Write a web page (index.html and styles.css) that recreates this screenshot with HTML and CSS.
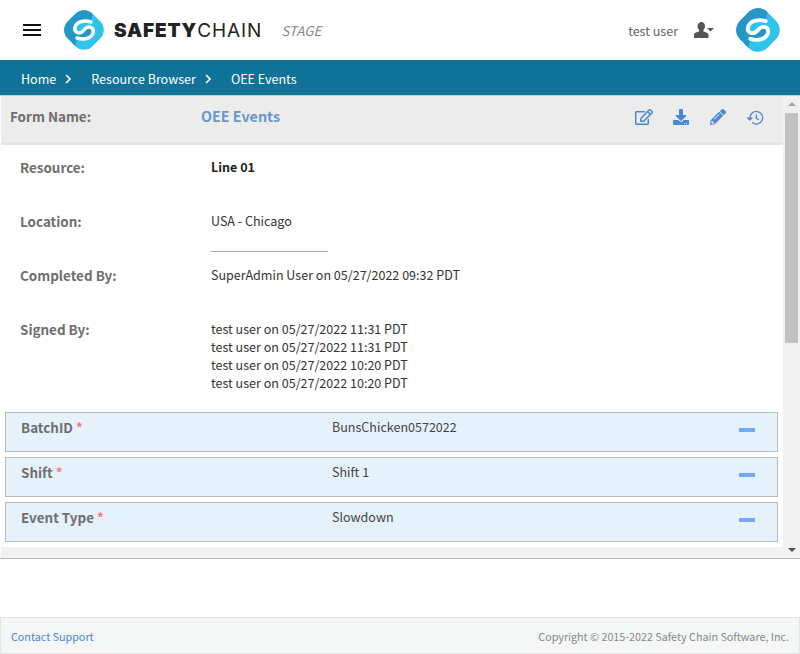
FILE: index.html
```html
<!DOCTYPE html>
<html lang="en">
<head>
  <meta charset="UTF-8" />
  <meta name="viewport" content="width=device-width, initial-scale=1" />
  <title>OEE Events</title>
  <link rel="stylesheet" href="styles.css">
</head>
<body>
  <svg class="defs" width="0" height="0">
    <defs>
      <clipPath id="logo-shape">
        <rect x="2.500" y="2.500" width="35" height="35" rx="12" transform="rotate(-45 20 20)"/>
      </clipPath>
    </defs>
    <symbol id="logo" viewBox="0 0 40 40">
      <g clip-path="url(#logo-shape)">
        <rect width="40" height="40" fill="#2ec4ec"/>
        <path d="M29 2L27 12C21 10 13 11 11 17C9.500 23 16 25 20 20C24 15 30.500 17 29 23C27 29 19 30 13 28L11 38L-5 45L-5 -5L29 -5Z" fill="#2596c6"/>
      </g>
      <path d="M27 12C21 10 13 11 11 17C9.500 23 16 25 20 20C24 15 30.500 17 29 23C27 29 19 30 13 28" fill="none" stroke="#fff" stroke-width="3.500" stroke-linecap="round"/>
    </symbol>
  </svg>

  <header class="topbar">
    <div class="menu-icon"><span></span><span></span><span></span></div>
    <svg class="logo"><use href="#logo"/></svg>
    <div class="brand"><b>SAFETY</b>CHAIN</div>
    <div class="stage">STAGE</div>
    <div class="user-name">test user</div>
    <svg class="user-icon" viewBox="0 0 20 16">
      <path d="M7.500 0c2.200 0 3.500 1.800 3.500 4.100 0 1.600-.7 3-1.600 3.800v1.700c2.200.7 5.100 1.300 5.100 3.300V16H0v-3.100c0-2 2.900-2.600 5.100-3.300V7.900C4.200 7.100 3.500 5.700 3.500 4.100 3.500 1.800 5.300 0 7.500 0z" fill="#555"/>
      <path d="M13 6h7l-3.500 3.500z" fill="#555"/>
    </svg>
    <svg class="logo logo-right"><use href="#logo"/></svg>
  </header>

  <nav class="crumbs">
    <a>Home</a>
    <svg class="chevron" viewBox="0 0 6 10"><path d="M1 1l4 4-4 4" fill="none" stroke="#fff" stroke-width="1.600"/></svg>
    <a>Resource Browser</a>
    <svg class="chevron" viewBox="0 0 6 10"><path d="M1 1l4 4-4 4" fill="none" stroke="#fff" stroke-width="1.600"/></svg>
    <a>OEE Events</a>
  </nav>

  <section class="panel">
    <div class="panel-body">
      <div class="form-head">
        <div class="form-label">Form Name:</div>
        <div class="form-name">OEE Events</div>
        <div class="form-actions">
          <svg viewBox="0 0 576 512"><path d="M402.300 344.900l32-32c5-5 13.700-1.500 13.700 5.700V464c0 26.500-21.500 48-48 48H48c-26.500 0-48-21.500-48-48V112c0-26.500 21.500-48 48-48h273.500c7.100 0 10.700 8.600 5.700 13.700l-32 32c-1.500 1.500-3.500 2.300-5.700 2.300H48v352h352V350.500c0-2.100.8-4.100 2.300-5.600zm156.600-201.800L296.300 405.700l-90.400 10c-26.200 2.900-48.500-19.200-45.600-45.600l10-90.400L432.900 17.100c22.900-22.900 59.900-22.900 82.700 0l43.200 43.200c22.900 22.900 22.900 60 .1 82.800zM460.100 174L402 115.900 216.200 301.800l-7.300 65.300 65.300-7.300L460.100 174zm64.800-79.700l-43.200-43.200c-4.100-4.100-10.800-4.100-14.800 0L436 82l58.100 58.100 30.900-30.900c4-4.200 4-10.800-.1-14.900z"/></svg>
          <svg viewBox="0 0 512 512"><path d="M216 0h80c13.300 0 24 10.700 24 24v168h87.700c17.800 0 26.700 21.500 14.100 34.100L269.700 378.300c-7.500 7.500-19.800 7.500-27.300 0L90.100 226.100c-12.600-12.600-3.700-34.100 14.100-34.100H192V24c0-13.300 10.700-24 24-24zm296 376v112c0 13.300-10.700 24-24 24H24c-13.300 0-24-10.700-24-24V376c0-13.300 10.700-24 24-24h146.700l49 49c20.100 20.100 52.500 20.100 72.600 0l49-49H488c13.300 0 24 10.700 24 24zm-124 88c0-11-9-20-20-20s-20 9-20 20 9 20 20 20 20-9 20-20zm64 0c0-11-9-20-20-20s-20 9-20 20 9 20 20 20 20-9 20-20z"/></svg>
          <svg viewBox="0 0 512 512"><path d="M497.900 142.100l-46.100 46.100c-4.700 4.700-12.300 4.700-17 0l-111-111c-4.700-4.700-4.700-12.300 0-17l46.100-46.100c18.700-18.700 49.100-18.700 67.900 0l60.100 60.100c18.800 18.700 18.800 49.100 0 67.900zM284.200 99.800L21.600 362.400.4 483.900c-2.900 16.400 11.400 30.600 27.800 27.800l121.500-21.300 262.600-262.600c4.700-4.700 4.700-12.300 0-17l-111-111c-4.800-4.700-12.400-4.700-17.100 0zM124.100 339.900c-5.500-5.500-5.500-14.300 0-19.800l154-154c5.500-5.500 14.300-5.500 19.800 0s5.500 14.300 0 19.800l-154 154c-5.500 5.500-14.300 5.500-19.800 0zM88 424h48v36.300l-64.500 11.300-31.100-31.100L51.700 376H88v48z"/></svg>
          <svg class="history" viewBox="0 0 18 16"><path d="M4 9a6.300 6.300 0 1 1 2.300 4.600" fill="none" stroke="#4a86d8" stroke-width="1.300"/><path d="M.5 8.500h6.500L3.800 12z" fill="#4a86d8"/><path d="M10.300 5.500v3.800l2.500 1.500" fill="none" stroke="#4a86d8" stroke-width="1.300"/></svg>
        </div>
      </div>

      <div class="info-list">
        <div class="info-row">
          <div class="info-label">Resource:</div>
          <div class="info-value strong">Line 01</div>
        </div>
        <div class="info-row">
          <div class="info-label">Location:</div>
          <div class="info-value with-rule">USA - Chicago</div>
        </div>
        <div class="info-row">
          <div class="info-label">Completed By:</div>
          <div class="info-value">SuperAdmin User on 05/27/2022 09:32 PDT</div>
        </div>
        <div class="info-row signed">
          <div class="info-label">Signed By:</div>
          <div class="info-value">
            <div>test user on 05/27/2022 11:31 PDT</div>
            <div>test user on 05/27/2022 11:31 PDT</div>
            <div>test user on 05/27/2022 10:20 PDT</div>
            <div>test user on 05/27/2022 10:20 PDT</div>
          </div>
        </div>
      </div>

      <div class="field">
        <div class="field-label">BatchID <span class="req">*</span></div>
        <div class="field-value">BunsChicken0572022</div>
        <div class="field-toggle"></div>
      </div>
      <div class="field">
        <div class="field-label">Shift <span class="req">*</span></div>
        <div class="field-value">Shift 1</div>
        <div class="field-toggle"></div>
      </div>
      <div class="field">
        <div class="field-label">Event Type <span class="req">*</span></div>
        <div class="field-value">Slowdown</div>
        <div class="field-toggle"></div>
      </div>
    </div>
    <div class="scrollbar">
      <div class="arrow-up"></div>
      <div class="thumb"></div>
      <div class="arrow-down"></div>
    </div>
    <div class="panel-strip"></div>
  </section>

  <footer class="footer">
    <a>Contact Support</a>
    <span>Copyright &copy; 2015-2022 Safety Chain Software, Inc.</span>
  </footer>
</body>
</html>
```

FILE: styles.css
```css
html, body {
  margin: 0;
  height: 654px;
  overflow: hidden;
}
body {
  font-family: "Noto Sans CJK SC", Lato, sans-serif;
  font-size: 12.54px;
  color: #333;
  background: white;
  display: flex;
  flex-direction: column;
}
.defs {
  position: absolute;
}
.topbar {
  height: 60px;
  display: flex;
  align-items: center;
  flex-shrink: 0;
}
.menu-icon {
  width: 18px;
  margin-left: 23px;
  display: flex;
  flex-direction: column;
  gap: 3px;
}
.menu-icon span {
  height: 2px;
  background: #111;
}
.logo {
  width: 40px;
  height: 40px;
  margin-left: 23px;
}
.brand {
  margin-left: 10px;
  font-family: Inter, "Liberation Sans", sans-serif;
  font-size: 19px;
  letter-spacing: 0.9px;
  color: #222;
}
.brand b {
  font-weight: 900;
}
.stage {
  margin-left: 19px;
  font-style: italic;
  font-size: 13.4px;
  color: #888;
}
.user-name {
  margin-left: auto;
  color: #666;
}
.user-icon {
  width: 20px;
  height: 16px;
  margin-left: 16px;
}
.logo-right {
  margin-left: 22px;
  margin-right: 20px;
  width: 44px;
  height: 44px;
}
.crumbs {
  height: 35px;
  background: #0e7396;
  color: white;
  display: flex;
  align-items: center;
  padding: 1px 0 0 21px;
  box-sizing: border-box;
  flex-shrink: 0;
}
.chevron {
  width: 6px;
  height: 10px;
  margin: 1px 20px 0 9px;
}
.panel {
  height: 464px;
  border-top: 1px solid #ccc;
  border-bottom: 1px solid #bbb;
  box-sizing: border-box;
  display: grid;
  grid-template-columns: 1fr 17px;
  grid-template-rows: 1fr 11px;
  padding-left: 1px;
  flex-shrink: 0;
}
.panel-body {
  overflow: hidden;
  min-height: 0;
}
.panel-strip {
  grid-column: 1 / 2;
  background: #f1f1f1;
}
.scrollbar {
  grid-column: 2;
  grid-row: 1 / 3;
  background: #f1f1f1;
  display: flex;
  flex-direction: column;
  align-items: center;
  padding-top: 6px;
  padding-bottom: 6px;
}
.arrow-up {
  border: 4px solid transparent;
  border-top: 0;
  border-bottom: 4px solid #a3a3a3;
}
.thumb {
  width: 13px;
  height: 230px;
  margin-top: 7px;
  background: #c1c1c1;
}
.arrow-down {
  margin-top: auto;
  border: 4px solid transparent;
  border-bottom: 0;
  border-top: 4px solid #505050;
}
.form-head {
  height: 47px;
  background: #ececec;
  border-bottom: 2px solid #e4e4e4;
  display: flex;
  font-weight: 700;
  padding-left: 9px;
  line-height: 20px;
}
.form-label {
  width: 191px;
  padding-top: 10px;
  font-size: 13.44px;
  color: #6e6e6e;
}
.form-name {
  padding-top: 10px;
  color: #6a97c9;
  font-size: 14.3px;
}
.form-actions {
  margin-left: auto;
  display: flex;
  gap: 19px;
  padding: 13px 19px 0 0;
  fill: #4a86d8;
}
.form-actions svg {
  width: 18px;
  height: 16px;
}
.info-list {
  padding-top: 13px;
}
.info-row {
  height: 54px;
  display: flex;
  padding-left: 19px;
  box-sizing: border-box;
  line-height: 18px;
}
.info-label {
  width: 191px;
  font-size: 13.44px;
  font-weight: 700;
  color: #6e6e6e;
}
.info-value {
  color: #333;
}
.strong {
  font-weight: 700;
  color: #222;
}
.with-rule {
  width: 117px;
  height: 39px;
  border-bottom: 1px solid #aaa;
}
.signed {
  height: 92px;
}
.field {
  height: 40px;
  margin: 0 5px 5px 4px;
  background: #e5f2fc;
  border: 1px solid #bbb;
  box-sizing: border-box;
  display: flex;
  line-height: 18px;
  padding-top: 5px;
}
.field-label {
  width: 311px;
  padding-left: 15px;
  font-size: 13.44px;
  font-weight: 700;
  color: #6e6e6e;
}
.req {
  color: #f77;
}
.field-value {
  color: #444;
}
.field-toggle {
  width: 16px;
  height: 4px;
  margin: 10px 22px 0 auto;
  background: #76a9f5;
}
.footer {
  margin-top: 58px;
  height: 37px;
  box-sizing: border-box;
  background: #f5f7f7;
  border: 1px solid #e5e5e5;
  display: flex;
  align-items: center;
  justify-content: space-between;
  padding: 1px 10px 0;
  font-size: 10.75px;
  color: #888;
}
.footer a {
  color: #4a86d8;
}
```
